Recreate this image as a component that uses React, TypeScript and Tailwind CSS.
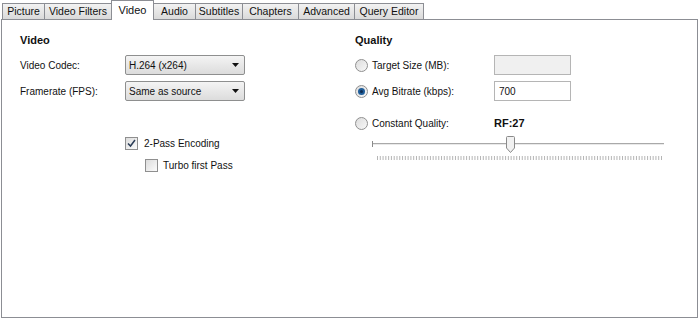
import React from 'react';

const tabs = ['Picture', 'Video Filters', 'Video', 'Audio', 'Subtitles', 'Chapters', 'Advanced', 'Query Editor'];
const tabWidths = [43, 68, 43, 43, 48, 57, 57, 70];

function Dropdown({ value }: { value: string }) {
  return (
    <div className="flex h-[20px] w-[120px] items-center justify-between rounded-[2px] border border-[#8e8f8f] bg-gradient-to-b from-[#f4f4f4] to-[#dcdcdc] pl-[3px] pr-[5px] text-[#111]">
      <span>{value}</span>
      <svg width="7" height="4" viewBox="0 0 7 4">
        <path d="M0 0 L7 0 L3.5 4 Z" fill="#111" />
      </svg>
    </div>
  );
}

function Radio({ checked }: { checked?: boolean }) {
  return (
    <div className="flex h-[13px] w-[13px] items-center justify-center rounded-full border border-[#8f8f8f] bg-gradient-to-br from-[#dcdcdc] to-[#f8f8f8]">
      {checked && (
        <div className="flex h-[7px] w-[7px] items-center justify-center rounded-full bg-[#1f5d99]">
          <div className="h-[3px] w-[3px] rounded-full bg-[#0e2c52]" />
        </div>
      )}
    </div>
  );
}

function Checkbox({ checked }: { checked?: boolean }) {
  return (
    <div className="flex h-[13px] w-[13px] items-center justify-center border border-[#8f8f8f] bg-gradient-to-br from-[#dcdcdc] to-[#fbfbfb]">
      {checked && (
        <svg width="9" height="9" viewBox="0 0 9 9">
          <path d="M1 4.5 L3.5 7 L8 1" fill="none" stroke="#2a3c56" strokeWidth="1.5" />
        </svg>
      )}
    </div>
  );
}

function Ticks() {
  const n = 102;
  const w = 285;
  return (
    <svg width={w} height="4" className="block">
      {Array.from({ length: n + 1 }).map((_, i) => (
        <line key={i} x1={(i * (w - 1)) / n + 0.5} x2={(i * (w - 1)) / n + 0.5} y1="0" y2="4" stroke="#b5b5b5" strokeWidth="1" />
      ))}
    </svg>
  );
}

export default function App() {
  return (
    <div className="h-[319px] w-[700px] bg-white font-['Liberation_Sans',Arial,sans-serif] text-[10px] leading-[13px] text-[#111]">
      {/* Tab strip */}
      <div className="flex h-[19px] items-end pl-[2px]">
        {tabs.map((t, i) =>
          t === 'Video' ? (
            <div
              key={t}
              style={{ width: tabWidths[i] }}
              className="relative z-10 -mb-px -ml-px flex h-[20px] items-start justify-center border border-b-0 border-[#8c8e94] bg-white pt-[3px] text-[11px]"
            >
              {t}
            </div>
          ) : (
            <div
              key={t}
              style={{ width: tabWidths[i] }}
              className={`flex h-[16px] items-center justify-center border border-b-0 border-[#8c8e94] bg-gradient-to-b from-[#f2f2f2] to-[#dadada] text-[10.5px] ${i === 0 ? '' : '-ml-px'}`}
            >
              {t}
            </div>
          )
        )}
      </div>

      {/* Panel */}
      <div className="ml-[1px] mr-[2px] flex h-[299px] border border-[#8c8e94] bg-white">
        {/* Left column */}
        <div className="w-[353px] pl-[18px] pt-[13px]">
          <div className="text-[11px] font-bold leading-[14px]">Video</div>
          <div className="mt-[8px] flex items-center">
            <span className="w-[105px]">Video Codec:</span>
            <Dropdown value="H.264 (x264)" />
          </div>
          <div className="mt-[6px] flex items-center">
            <span className="w-[105px]">Framerate (FPS):</span>
            <Dropdown value="Same as source" />
          </div>
          <div className="ml-[105px] mt-[36px] flex items-center gap-[6px]">
            <Checkbox checked />
            <span>2-Pass Encoding</span>
          </div>
          <div className="ml-[125px] mt-[9px] flex items-center gap-[5px]">
            <Checkbox />
            <span>Turbo first Pass</span>
          </div>
        </div>

        {/* Right column */}
        <div className="pt-[13px]">
          <div className="text-[11px] font-bold leading-[14px]">Quality</div>
          <div className="mt-[8px] flex items-center">
            <Radio />
            <span className="ml-[4px] w-[122px]">Target Size (MB):</span>
            <div className="h-[20px] w-[77px] border border-[#b5b5b5] bg-[#f0f0f0]" />
          </div>
          <div className="mt-[6px] flex items-center">
            <Radio checked />
            <span className="ml-[4px] w-[122px]">Avg Bitrate (kbps):</span>
            <div className="flex h-[20px] w-[77px] items-center border border-[#b5b5b5] bg-white pl-[4px]">700</div>
          </div>
          <div className="mt-[16px] flex items-center">
            <Radio />
            <span className="ml-[4px] w-[122px]">Constant Quality:</span>
            <span className="text-[11px] font-bold">RF:27</span>
          </div>
          <div className="ml-[17px] mt-[6px] w-[292px]">
            <div className="relative h-[17px]">
              <div className="absolute left-0 right-0 top-[7px] h-[2px] border-t border-[#a9a9a9] bg-[#e9e9e9]" />
              <div className="absolute left-0 top-[5px] h-[6px] w-px bg-[#8a8a8a]" />
              <svg className="absolute left-[134px] top-0" width="9" height="17" viewBox="0 0 9 17">
                <path d="M0.5 1.5 Q0.5 0.5 1.5 0.5 L7.5 0.5 Q8.5 0.5 8.5 1.5 L8.5 12 L4.5 16.5 L0.5 12 Z" fill="#f1f1f1" stroke="#8a8a8a" />
              </svg>
            </div>
            <div className="ml-[5px] mt-[3px]">
              <Ticks />
            </div>
          </div>
        </div>
      </div>
    </div>
  );
}
